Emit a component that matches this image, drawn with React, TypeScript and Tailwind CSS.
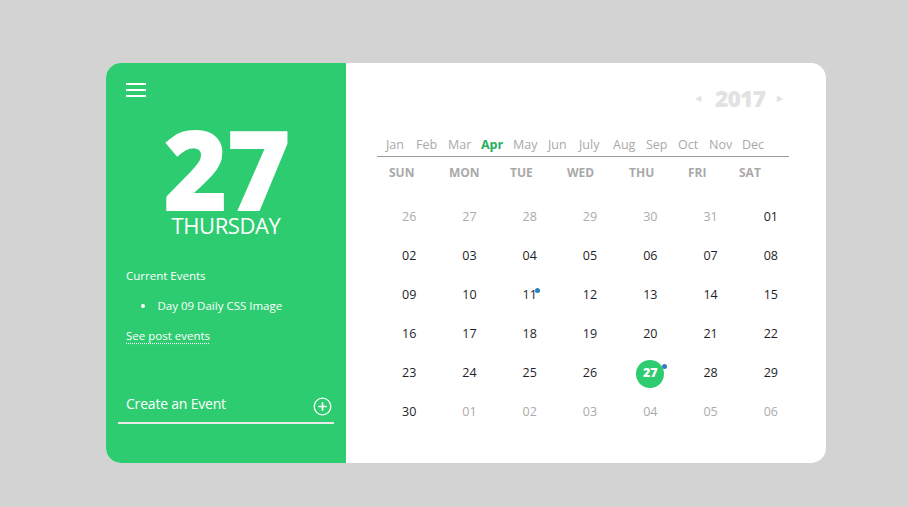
import React from "react";

const months: [string, number][] = [
  ["Jan", 30], ["Feb", 32], ["Mar", 33], ["Apr", 32], ["May", 35], ["Jun", 31],
  ["July", 34], ["Aug", 33], ["Sep", 32], ["Oct", 31], ["Nov", 33], ["Dec", 30],
];

const heads: [string, number][] = [
  ["SUN", 60], ["MON", 61], ["TUE", 57], ["WED", 62], ["THU", 59], ["FRI", 51], ["SAT", 40],
];

type Day = { d: string; muted?: boolean; sel?: boolean; dot?: boolean };

const days: Day[] = [
  ...["26", "27", "28", "29", "30", "31"].map((d) => ({ d, muted: true })),
  { d: "01" },
  ...["02","03","04","05","06","07","08","09","10"].map((d) => ({ d })),
  { d: "11", dot: true },
  ...["12","13","14","15","16","17","18","19","20","21","22","23","24","25","26"].map((d) => ({ d })),
  { d: "27", sel: true },
  { d: "28" }, { d: "29" }, { d: "30" },
  ...["01", "02", "03", "04", "05", "06"].map((d) => ({ d, muted: true })),
];

export default function App() {
  return (
    <div
      className="w-[908px] h-[507px] bg-[#d3d3d3] pt-[63px] pl-[106px]"
      style={{ fontFamily: '"Open Sans", "Noto Sans", sans-serif' }}
    >
      <div className="flex w-[720px] h-[400px] rounded-[15px] overflow-hidden bg-white">
        {/* Left panel */}
        <div className="w-[240px] bg-[#2ecc71] text-white flex flex-col px-5 pt-5">
          <div className="flex flex-col gap-[4px] w-[20px]">
            <div className="h-[2px] bg-white" />
            <div className="h-[2px] bg-white" />
            <div className="h-[2px] bg-white" />
          </div>
          <div className="mt-[26px] text-center text-[111px] font-extrabold leading-[90px] tracking-[-2px]">
            27
          </div>
          <div className="-mt-[1px] text-center text-[22px] leading-[26px] tracking-[-0.4px]">
            THURSDAY
          </div>
          <div className="mt-[30px] text-[11.5px] leading-[16px]">Current Events</div>
          <ul className="mt-[14px] pl-[15px] text-[11.5px] leading-[16px] list-disc list-inside">
            <li>Day 09 Daily CSS Image</li>
          </ul>
          <div className="mt-[14px] text-[11.5px] leading-[16px]">
            <span className="underline decoration-dotted underline-offset-[3px]">See post events</span>
          </div>
          <div className="mt-[50px] -mx-[8px] px-[8px] h-[30px] border-b-[2px] border-[#e8e8e8] flex items-start justify-between">
            <span className="text-[14px] leading-[20px] tracking-[-0.2px]">Create an Event</span>
            <svg width="19" height="19" viewBox="0 0 19 19" className="mt-[3px] -mr-[6px]">
              <circle cx="9.5" cy="9.5" r="8.3" fill="none" stroke="white" strokeWidth="1.3" />
              <path d="M9.5 5.3v8.4M5.3 9.5h8.4" stroke="white" strokeWidth="1.6" />
            </svg>
          </div>
        </div>

        {/* Right panel */}
        <div className="flex-1 flex flex-col pt-[25px]">
          <div className="h-[20px] flex items-center justify-end pr-[43px] text-[#e2e2e2]">
            <span className="text-[8px] mr-[14px]">◀</span>
            <span className="text-[23px] font-extrabold leading-[20px] tracking-[-1px]">2017</span>
            <span className="text-[8px] ml-[12px]">▶</span>
          </div>
          <div className="mt-[26px] ml-[31px] w-[412px] h-[23px] border-b border-[#9a9a9a] pl-[9px] flex items-center">
            {months.map(([m, w]) => (
              <span
                key={m}
                style={{ width: w }}
                className={
                  m === "Apr"
                    ? "text-[12.5px] text-[#27ae60] font-bold shrink-0"
                    : "text-[12.5px] text-[#a9a9a9] shrink-0"
                }
              >
                {m}
              </span>
            ))}
          </div>
          <div className="h-[31px] flex items-center pl-[43px]">
            {heads.map(([h, w]) => (
              <span key={h} style={{ width: w }} className="shrink-0 text-[12px] font-bold text-[#a9a9a9]">
                {h}
              </span>
            ))}
          </div>
          <div className="mt-[10px] ml-[33px] w-[422px] grid grid-cols-7 auto-rows-[39px]">
            {days.map((x, i) => (
              <div key={i} className="flex items-center justify-center">
                {x.sel ? (
                  <div className="relative w-[28px] h-[28px] rounded-full bg-[#2ecc71] flex items-center justify-center text-white text-[12.5px] font-extrabold">
                    27
                    <span className="absolute -right-[3px] top-[4px] w-[5px] h-[5px] rounded-full bg-[#2f80c0]" />
                  </div>
                ) : (
                  <span
                    className={
                      "relative text-[12.5px] " + (x.muted ? "text-[#ababab]" : "text-[#1e1e28]")
                    }
                  >
                    {x.d}
                    {x.dot && (
                      <span className="absolute -right-[3px] top-[2px] w-[5px] h-[5px] rounded-full bg-[#2f80c0]" />
                    )}
                  </span>
                )}
              </div>
            ))}
          </div>
        </div>
      </div>
    </div>
  );
}
